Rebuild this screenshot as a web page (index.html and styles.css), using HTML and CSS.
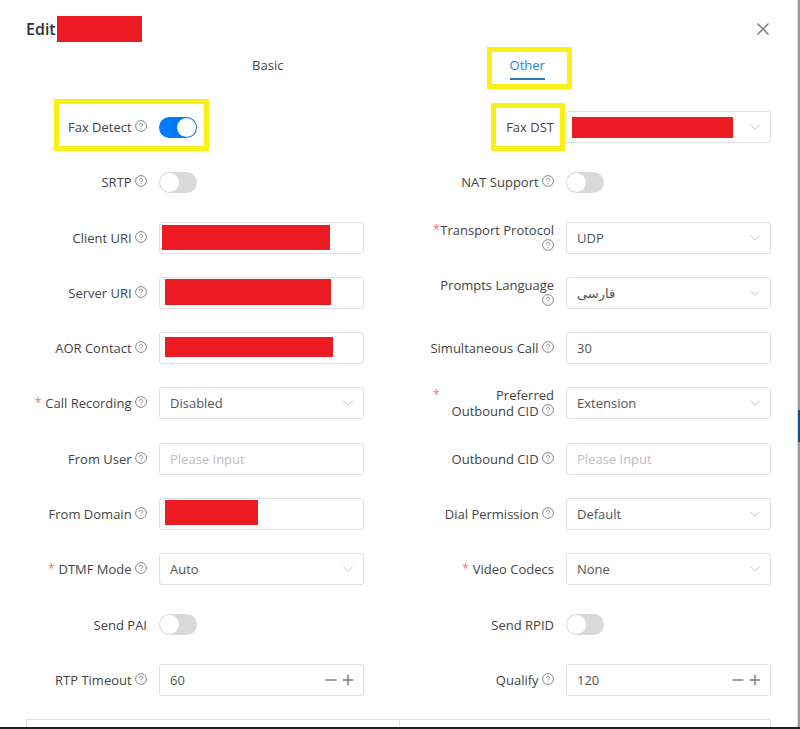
FILE: index.html
```
<!DOCTYPE html>
<html lang="en">
<head>
    <meta charset="UTF-8">
    <meta name="viewport" content="width=device-width, initial-scale=1.0">
    <title>Edit Trunk</title>
    <link rel="stylesheet" href="styles.css">
</head>
<body>

<svg class="sprite" aria-hidden="true">
    <symbol id="help" viewBox="0 0 12 12">
        <circle cx="6" cy="6" r="5.4"/>
        <path d="M4.4 4.8a1.6 1.5 0 1 1 2.5 1.2c-.6.4-.9.6-.9 1.2M6 8.3v.9"/>
    </symbol>
    <symbol id="down" viewBox="0 0 12 12">
        <path d="M1.5 3.8 6 8.2l4.5-4.4"/>
    </symbol>
    <symbol id="minus" viewBox="0 0 12 12">
        <path d="M.5 6h11"/>
    </symbol>
    <symbol id="plus" viewBox="0 0 12 12">
        <path d="M.8 6h10.4M6 .8v10.4"/>
    </symbol>
    <symbol id="close" viewBox="0 0 12 12">
        <path d="M.5.5l11 11M11.5.5l-11 11"/>
    </symbol>
</svg>

<div class="screen">
    <div class="dialog" role="dialog" aria-labelledby="title">
        <header class="header">
            <h1 id="title">Edit</h1>
            <span class="redacted-name"></span>
            <button class="close" type="button" aria-label="Close"><svg><use href="#close"/></svg></button>
        </header>

        <nav class="tabs">
            <a class="tab" href="#basic">Basic</a>
            <a class="tab active" href="#other">Other<span class="mark mark-tab"></span></a>
        </nav>

        <form class="form">
            <div class="item">
                <label for="faxDetect"><span>Fax Detect <svg class="help"><use href="#help"/></svg></span></label>
                <input class="switch" type="checkbox" id="faxDetect" checked>
                <span class="mark mark-detect"></span>
            </div>
            <div class="item">
                <label for="faxDst"><span>Fax DST</span></label>
                <div class="control">
                    <select id="faxDst"><option></option></select>
                    <svg class="arrow"><use href="#down"/></svg>
                    <span class="redacted redacted-dst"></span>
                </div>
                <span class="mark mark-dst"></span>
            </div>

            <div class="item">
                <label for="srtp"><span>SRTP <svg class="help"><use href="#help"/></svg></span></label>
                <input class="switch" type="checkbox" id="srtp">
            </div>
            <div class="item">
                <label for="nat"><span>NAT Support <svg class="help"><use href="#help"/></svg></span></label>
                <input class="switch" type="checkbox" id="nat">
            </div>

            <div class="item">
                <label for="clientUri"><span>Client URI <svg class="help"><use href="#help"/></svg></span></label>
                <div class="control">
                    <input type="text" id="clientUri">
                    <span class="redacted redacted-client"></span>
                </div>
            </div>
            <div class="item">
                <label class="required wrapped" for="transport"><span>Transport Protocol<br><svg class="help"><use href="#help"/></svg></span></label>
                <div class="control">
                    <select id="transport"><option>UDP</option></select>
                    <svg class="arrow"><use href="#down"/></svg>
                </div>
            </div>

            <div class="item">
                <label for="serverUri"><span>Server URI <svg class="help"><use href="#help"/></svg></span></label>
                <div class="control">
                    <input type="text" id="serverUri">
                    <span class="redacted redacted-server"></span>
                </div>
            </div>
            <div class="item">
                <label for="language"><span>Prompts Language<br><svg class="help"><use href="#help"/></svg></span></label>
                <div class="control">
                    <select id="language"><option>فارسی</option></select>
                    <svg class="arrow"><use href="#down"/></svg>
                </div>
            </div>

            <div class="item">
                <label for="aor"><span>AOR Contact <svg class="help"><use href="#help"/></svg></span></label>
                <div class="control">
                    <input type="text" id="aor">
                    <span class="redacted redacted-aor"></span>
                </div>
            </div>
            <div class="item">
                <label for="calls"><span>Simultaneous Call <svg class="help"><use href="#help"/></svg></span></label>
                <div class="control">
                    <input type="text" id="calls" value="30">
                </div>
            </div>

            <div class="item">
                <label class="required" for="recording"><span>Call Recording <svg class="help"><use href="#help"/></svg></span></label>
                <div class="control">
                    <select id="recording"><option>Disabled</option></select>
                    <svg class="arrow"><use href="#down"/></svg>
                </div>
            </div>
            <div class="item">
                <label class="required wrapped" for="preferredCid"><span>Preferred<br>Outbound CID <svg class="help"><use href="#help"/></svg></span></label>
                <div class="control">
                    <select id="preferredCid"><option>Extension</option></select>
                    <svg class="arrow"><use href="#down"/></svg>
                </div>
            </div>

            <div class="item">
                <label for="fromUser"><span>From User <svg class="help"><use href="#help"/></svg></span></label>
                <div class="control">
                    <input type="text" id="fromUser" placeholder="Please Input">
                </div>
            </div>
            <div class="item">
                <label for="outboundCid"><span>Outbound CID <svg class="help"><use href="#help"/></svg></span></label>
                <div class="control">
                    <input type="text" id="outboundCid" placeholder="Please Input">
                </div>
            </div>

            <div class="item">
                <label for="fromDomain"><span>From Domain <svg class="help"><use href="#help"/></svg></span></label>
                <div class="control">
                    <input type="text" id="fromDomain">
                    <span class="redacted redacted-domain"></span>
                </div>
            </div>
            <div class="item">
                <label for="permission"><span>Dial Permission <svg class="help"><use href="#help"/></svg></span></label>
                <div class="control">
                    <select id="permission"><option>Default</option></select>
                    <svg class="arrow"><use href="#down"/></svg>
                </div>
            </div>

            <div class="item">
                <label class="required" for="dtmf"><span>DTMF Mode <svg class="help"><use href="#help"/></svg></span></label>
                <div class="control">
                    <select id="dtmf"><option>Auto</option></select>
                    <svg class="arrow"><use href="#down"/></svg>
                </div>
            </div>
            <div class="item">
                <label class="required" for="codecs"><span>Video Codecs</span></label>
                <div class="control">
                    <select id="codecs"><option>None</option></select>
                    <svg class="arrow"><use href="#down"/></svg>
                </div>
            </div>

            <div class="item">
                <label for="sendPai"><span>Send PAI</span></label>
                <input class="switch" type="checkbox" id="sendPai">
            </div>
            <div class="item">
                <label for="sendRpid"><span>Send RPID</span></label>
                <input class="switch" type="checkbox" id="sendRpid">
            </div>

            <div class="item">
                <label for="rtp"><span>RTP Timeout <svg class="help"><use href="#help"/></svg></span></label>
                <div class="control">
                    <input type="text" id="rtp" value="60">
                    <div class="stepper">
                        <button type="button" aria-label="Decrease"><svg><use href="#minus"/></svg></button>
                        <button type="button" aria-label="Increase"><svg><use href="#plus"/></svg></button>
                    </div>
                </div>
            </div>
            <div class="item">
                <label for="qualify"><span>Qualify <svg class="help"><use href="#help"/></svg></span></label>
                <div class="control">
                    <input type="text" id="qualify" value="120">
                    <div class="stepper">
                        <button type="button" aria-label="Decrease"><svg><use href="#minus"/></svg></button>
                        <button type="button" aria-label="Increase"><svg><use href="#plus"/></svg></button>
                    </div>
                </div>
            </div>
        </form>

        <div class="panel">
            <div></div>
            <div></div>
        </div>
    </div>
    <div class="backdrop"><span></span></div>
</div>

</body>
</html>
```
FILE: styles.css
```
* {
    box-sizing: border-box;
}
body {
    margin: 0;
    font-family: "Open Sans", "Noto Sans", "DejaVu Sans", sans-serif;
    font-size: 13px;
    line-height: 16px;
    color: #444;
    background-color: #fff;
}
svg {
    fill: none;
    stroke: currentColor;
}
.sprite {
    display: none;
}
.screen {
    display: flex;
    min-height: 100vh;
    border-bottom: 2px solid #222;
}
.dialog {
    flex: 1;
    display: flex;
    flex-direction: column;
    padding: 16px 26px 0;
}
.backdrop {
    width: 3px;
    padding-top: 410px;
    background-color: #999;
    border-left: 1px solid #ddd;
}
.backdrop span {
    display: block;
    height: 32px;
    background-color: #12508f;
}

/* header */
.header {
    display: flex;
    align-items: center;
    height: 26px;
}
h1 {
    margin: 0;
    font-size: 16px;
    font-weight: 600;
    color: #333;
}
.redacted-name {
    width: 85px;
    height: 26px;
    margin-left: 1px;
    background-color: #ed1c24;
}
button {
    display: flex;
    padding: 0;
    border: 0;
    background: none;
    color: #777;
    cursor: pointer;
}
button svg {
    width: 12px;
    height: 12px;
    stroke-width: 1.4;
}
.close {
    margin-left: auto;
    padding: 2px;
}

/* tabs */
.tabs {
    display: flex;
    justify-content: space-evenly;
    margin: 13px 0 31px;
}
.tab {
    position: relative;
    height: 25px;
    padding-top: 2px;
    line-height: 16px;
    color: #444;
    text-decoration: none;
}
.tab.active {
    color: #2a82d8;
    border-bottom: 2px solid #2f79b5;
}

/* form */
.form {
    flex: 1;
    display: grid;
    grid-template-columns: 1fr 1fr;
    align-content: space-between;
    gap: 16px 69px;
}
.item {
    position: relative;
    display: grid;
    grid-template-columns: 121px 1fr;
    gap: 12px;
    align-items: center;
    height: 32px;
}
label {
    display: flex;
    justify-content: flex-end;
    text-align: right;
    white-space: nowrap;
}
label.required::before {
    content: "*";
    margin-right: 4px;
    font-size: 12px;
    color: #f56c6c;
}
label.wrapped {
    justify-content: space-between;
}
label.wrapped::before {
    margin-right: 0;
}
.help {
    width: 12px;
    height: 12px;
    vertical-align: 0;
    stroke: #888;
    stroke-width: 1;
}
.control {
    position: relative;
}
.control input,
.control select {
    display: block;
    width: 100%;
    height: 32px;
    padding: 0 10px;
    border: 1px solid #e0e0e0;
    border-radius: 3px;
    background-color: #fff;
    font: inherit;
    color: #555;
    appearance: none;
    outline: none;
}
.control input::placeholder {
    color: #c0c0c0;
}
.arrow {
    position: absolute;
    top: 10px;
    right: 10px;
    width: 12px;
    height: 12px;
    color: #c0c4cc;
    pointer-events: none;
}
.stepper {
    position: absolute;
    top: 10px;
    right: 10px;
    display: flex;
    gap: 5px;
}
.switch {
    width: 38px;
    height: 21px;
    margin: 0;
    padding: 1px;
    border-radius: 11px;
    background-color: #d9d9d9;
    appearance: none;
}
.switch::before {
    content: "";
    display: block;
    width: 19px;
    height: 19px;
    border-radius: 50%;
    background-color: #fff;
}
.switch:checked {
    background-color: #007bff;
}
.switch:checked::before {
    margin-left: auto;
}

/* bottom panel, only its top edge shows */
.panel {
    display: grid;
    grid-template-columns: 1fr 1fr;
    height: 8px;
    margin-top: 23px;
    border: 1px solid #e0e0e0;
    border-bottom: 0;
}
.panel div + div {
    border-left: 1px solid #e0e0e0;
}

/* hidden values */
.redacted {
    position: absolute;
    left: 6px;
    background-color: #ed1c24;
}
.redacted-dst {
    top: 6px;
    width: 161px;
    height: 21px;
}
.redacted-client {
    top: 3px;
    left: 3px;
    width: 168px;
    height: 25px;
}
.redacted-server {
    top: 2px;
    width: 166px;
    height: 26px;
}
.redacted-aor {
    top: 5px;
    width: 168px;
    height: 20px;
}
.redacted-domain {
    top: 2px;
    width: 93px;
    height: 25px;
}

/* highlights */
.mark {
    position: absolute;
    border: 5px solid #fbf014;
    pointer-events: none;
}
.mark-tab {
    top: -8px;
    left: -23px;
    width: 85px;
    height: 42px;
}
.mark-detect {
    top: -12px;
    left: 28px;
    width: 155px;
    height: 52px;
}
.mark-dst {
    top: -8px;
    left: 58px;
    width: 74px;
    height: 48px;
}
```
